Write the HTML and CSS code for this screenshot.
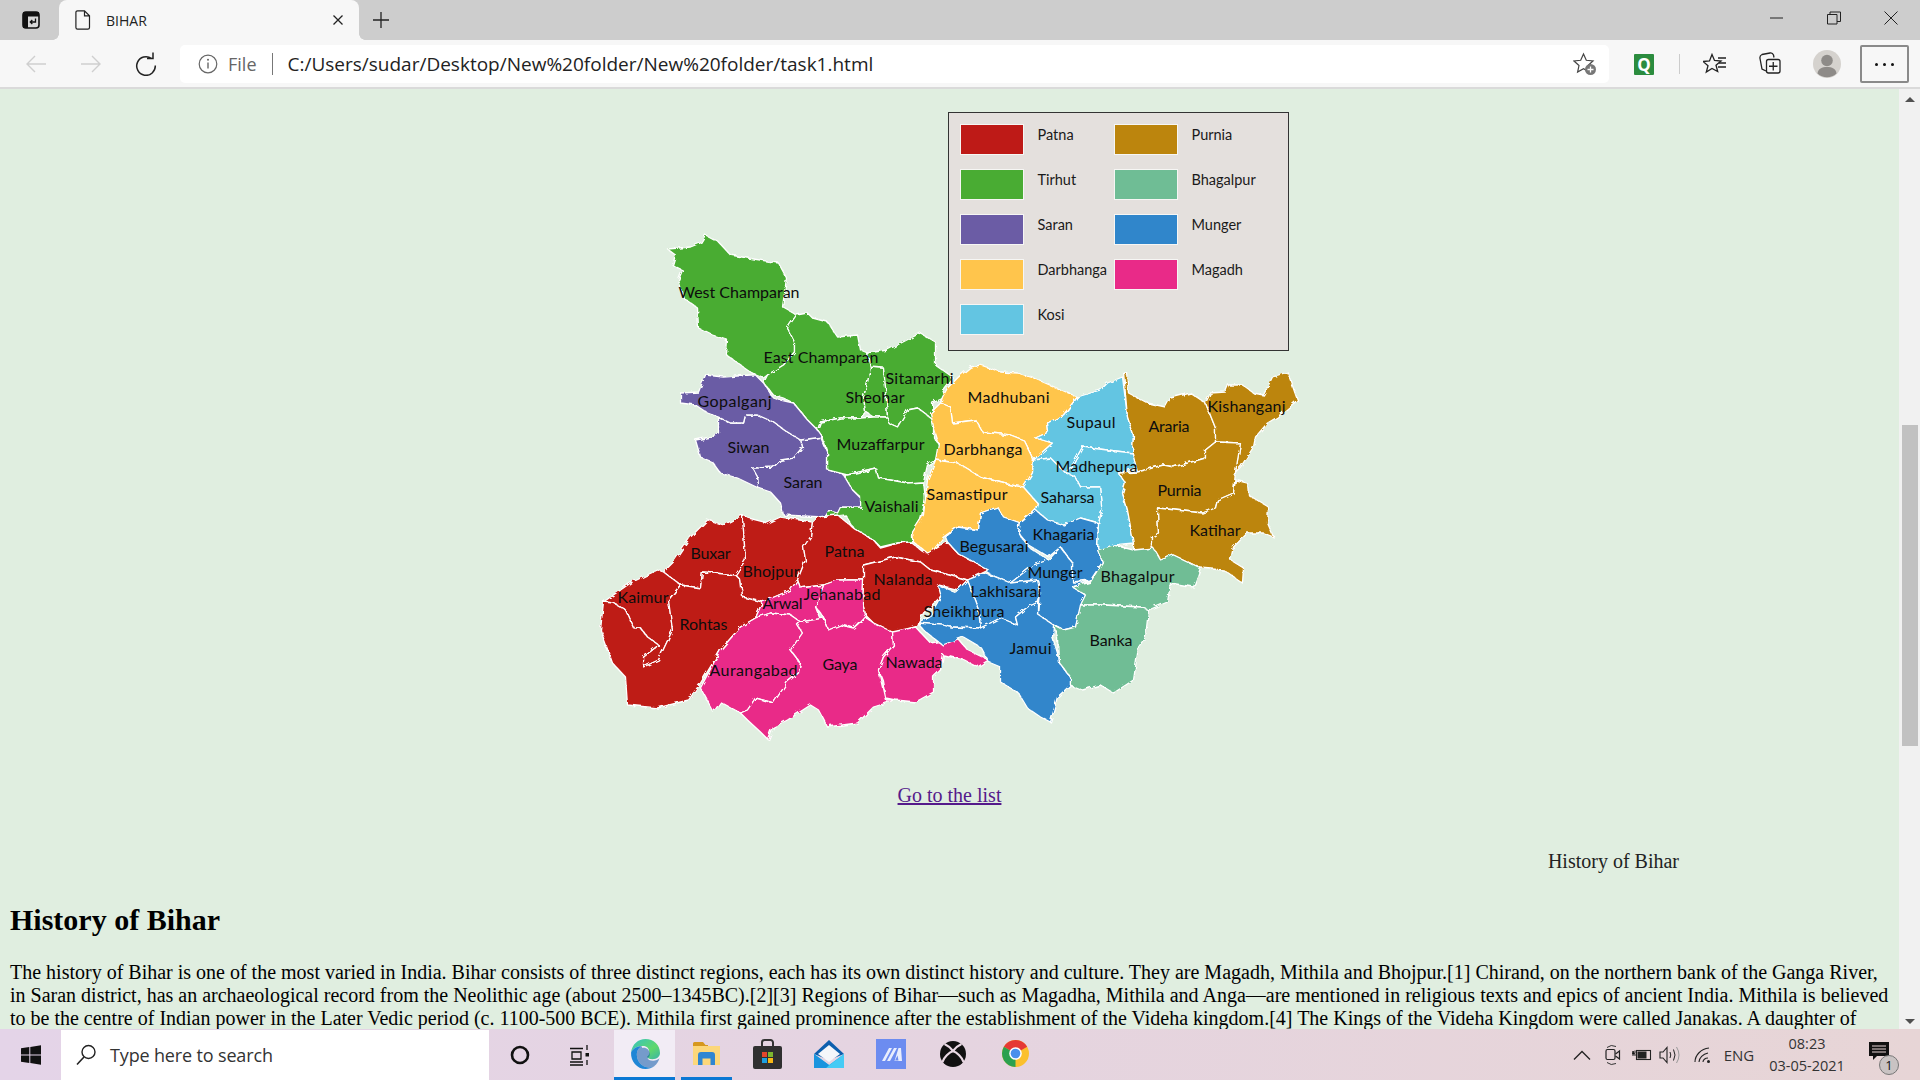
FILE: index.html
```html
<!DOCTYPE html>
<html lang="en">
<head>
<meta charset="utf-8">
<title>BIHAR</title>
<link rel="stylesheet" href="styles.css">
</head>
<body>
<div class="window">
  <header class="tabbar">
    <div class="tab-actions">
      <svg width="18" height="18" viewBox="0 0 18 18"><rect x="1" y="1" width="16" height="16" rx="3" fill="#d8d8d8" stroke="#111" stroke-width="1.600"/><path d="M1 1h16v4.500H6V17H1z" fill="#111"/><path d="M13.500 7.500V11H8.500M10.300 9 8.300 11l2 2" fill="none" stroke="#111" stroke-width="1.300"/></svg>
    </div>
    <div class="tab">
      <svg class="tab-file" width="16" height="20" viewBox="0 0 16 20"><path d="M2.500 .8h7l5 5v11.700a1.600 1.600 0 0 1-1.600 1.600H2.500a1.600 1.600 0 0 1-1.600-1.600V2.400A1.600 1.600 0 0 1 2.500 .8zM9.500 .8v5h5" fill="none" stroke="#222" stroke-width="1.200"/></svg>
      <span class="tab-title">BIHAR</span>
      <svg class="tab-close" width="10" height="10" viewBox="0 0 10 10"><path d="M.5 .5l9 9M9.500 .5l-9 9" stroke="#222" stroke-width="1.300"/></svg>
    </div>
    <div class="new-tab">
      <svg width="18" height="18" viewBox="0 0 18 18"><path d="M9 1v16M1 9h16" stroke="#222" stroke-width="1.300"/></svg>
    </div>
    <div class="win-controls">
      <div class="win-btn"><svg width="14" height="14" viewBox="0 0 14 14"><path d="M0 7h13" stroke="#222" stroke-width="1"/></svg></div>
      <div class="win-btn"><svg width="14" height="14" viewBox="0 0 14 14"><path d="M.5 3.500h9.500v9.500H.5zM3 3.500V1h10.500v9.500H10" fill="none" stroke="#222" stroke-width="1"/></svg></div>
      <div class="win-btn"><svg width="14" height="14" viewBox="0 0 14 14"><path d="M.5 .5l13 13M13.500 .5l-13 13" stroke="#222" stroke-width="1"/></svg></div>
    </div>
  </header>

  <nav class="toolbar">
    <div class="nav-btn"><svg width="22" height="20" viewBox="0 0 22 20"><path d="M21 10H2M10 2l-8 8 8 8" fill="none" stroke="#cfcfcf" stroke-width="1.400"/></svg></div>
    <div class="nav-btn"><svg width="22" height="20" viewBox="0 0 22 20"><path d="M1 10h19M12 2l8 8-8 8" fill="none" stroke="#cfcfcf" stroke-width="1.400"/></svg></div>
    <div class="nav-btn"><svg width="22" height="24" viewBox="0 0 22 24"><path d="M16.500 6.500A9.300 9.300 0 1 0 20.300 13.500" fill="none" stroke="#222" stroke-width="1.500"/><path d="M12 6.500h6V.5" fill="none" stroke="#222" stroke-width="1.500"/></svg></div>
    <div class="address">
      <svg width="20" height="20" viewBox="0 0 20 20"><circle cx="10" cy="10" r="8.800" fill="none" stroke="#666" stroke-width="1.200"/><path d="M10 8.500v6" stroke="#666" stroke-width="1.400"/><circle cx="10" cy="5.800" r="1" fill="#666"/></svg>
      <span class="addr-file">File</span>
      <span class="addr-sep"></span>
      <span class="addr-url">C:/Users/sudar/Desktop/New%20folder/New%20folder/task1.html</span>
      <svg class="addr-star" width="24" height="24" viewBox="0 0 24 24"><path d="M10.500 2l2.800 6.300 6.700.7-5 4.500 1.400 6.600-5.900-3.400-5.900 3.400 1.400-6.600-5-4.500 6.700-.7z" fill="none" stroke="#444" stroke-width="1.200"/><circle cx="17.500" cy="17.500" r="5.500" fill="#777"/><path d="M17.500 14.500v6M14.500 17.500h6" stroke="#fff" stroke-width="1.300"/></svg>
    </div>
    <div class="ext-cell"><span class="ext-q">Q</span></div>
    <span class="tool-sep"></span>
    <div class="tool"><svg width="24" height="22" viewBox="0 0 24 22"><path d="M9 1.500l2.500 6 6.500.5-5 4.200 1.700 6.300L9 15.500l-5.700 3.500 1.700-6.300L0 8.500l6.500-.5z" fill="none" stroke="#222" stroke-width="1.300"/><path d="M15 5h8M16 10h7M15 14h8" stroke="#222" stroke-width="1.300"/></svg></div>
    <div class="tool"><svg width="22" height="24" viewBox="0 0 22 24"><path d="M7 19 3 17 1 6.500Q.5 3.500 3 2.500L11 1q2.500-.5 3.500 2L15 5.500" fill="none" stroke="#222" stroke-width="1.300"/><rect x="7.500" y="7.500" width="13.500" height="13.500" rx="2" fill="none" stroke="#222" stroke-width="1.300"/><path d="M14.250 10v8.500M10 14.250h8.500" stroke="#222" stroke-width="1.300"/></svg></div>
    <div class="tool tool-wide"><svg width="28" height="28" viewBox="0 0 28 28"><circle cx="14" cy="14" r="14" fill="#d5d2ce"/><circle cx="14" cy="10.500" r="5.800" fill="#8e8b88"/><path d="M4.500 23.500C5 18.500 9 17 14 17s9 1.500 9.500 6.500a14 14 0 0 1-19 0z" fill="#8e8b88"/></svg></div>
    <div class="menu-btn"><span class="dot"></span><span class="dot"></span><span class="dot"></span></div>
  </nav>

  <div class="viewport">
    <main class="page">
      <figure class="map-figure">
        <svg class="map" viewBox="589.500 100 720 650" role="img" aria-label="Map of Bihar divisions">
          <defs>
            <filter id="rough" x="-5%" y="-5%" width="110%" height="110%">
              <feTurbulence type="fractalNoise" baseFrequency="0.14" numOctaves="3" seed="4"/>
              <feDisplacementMap in="SourceGraphic" scale="5"/>
            </filter>
          </defs>
          <g class="districts" filter="url(#rough)">
            <g class="d-green">
              <polygon points="667,249 690,247 700,243 705,235 718,242 730,255 753,259 778,263 786,278 782,307 796,315 787,328 794,342 794,352 783,365 767,375 763,378 753,374 740,365 726,355 727,340 712,335 698,328 697,308 683,298 678,280 682,270 672,265 675,255"/>
              <polygon points="796,315 807,313 812,318 827,322 837,337 857,335 860,350 867,353 870,367 867,383 863,397 865,412 860,418 840,418 820,422 817,430 807,420 793,403 783,398 773,395 763,383 767,375 783,365 794,352 794,342 787,328"/>
              <polygon points="870,367 883,368 885,387 886,400 887,417 873,417 865,412 863,397 867,383"/>
              <polygon points="867,353 887,350 920,333 935,342 935,365 952,377 942,390 945,397 932,403 933,420 917,408 907,410 897,427 888,423 887,417 886,400 885,387 883,368 870,367"/>
              <polygon points="817,430 820,422 840,418 860,418 873,417 887,417 888,423 897,427 907,410 917,408 933,420 933,437 940,447 935,460 927,465 923,482 907,483 878,478 875,468 847,475 827,470 827,453 822,437"/>
              <polygon points="847,475 875,468 878,478 907,483 923,482 925,500 920,520 912,533 912,542 897,543 880,547 873,540 853,528 845,515 828,517 823,513 836,508 840,507 860,507 860,497 852,490 843,475"/>
            </g>
            <g class="d-purple">
              <polygon points="800,440 820,437 827,453 827,470 843,475 852,490 860,498 860,507 840,507 837,513 827,510 823,517 783,515 780,503 770,492 758,488 757,477 752,468 773,467 780,460 793,458 802,447"/>
              <polygon points="718,417 730,423 743,423 745,415 757,415 773,422 787,432 800,440 802,447 793,458 780,460 773,467 752,468 757,477 758,488 737,478 720,473 712,462 700,457 695,440 710,437 718,433"/>
              <polygon points="705,375 723,377 750,375 755,375 763,383 772,397 780,400 793,403 807,420 817,430 822,437 800,440 787,432 773,422 757,415 745,415 743,423 730,423 718,417 707,413 695,405 680,403 680,393 698,392"/>
            </g>
            <g class="d-red">
              <polygon points="707,520 723,525 742,515 745,560 735,575 702,572 700,588 680,585 663,572 673,562 690,537"/>
              <polygon points="742,515 748,518 767,523 780,517 812,522 810,537 803,547 805,560 797,580 790,590 762,602 750,600 742,597 740,580 735,575 745,560"/>
              <polygon points="812,522 817,517 837,515 853,528 873,540 880,548 898,543 910,542 923,552 947,542 957,553 988,570 967,580 930,570 920,562 895,557 863,565 863,580 837,580 823,585 800,588 797,580 805,560 803,547 810,537"/>
              <polygon points="863,565 895,557 920,562 930,570 967,580 958,590 938,585 940,597 923,613 915,627 893,633 873,623 865,615 862,603 863,580"/>
              <polygon points="603,602 610,597 630,583 657,570 663,572 680,585 668,600 672,630 658,660 643,667 643,657 658,645 647,637 640,628 633,628 625,610 613,603"/>
              <polygon points="603,602 613,603 625,610 633,628 640,628 647,637 658,645 643,657 643,667 658,660 672,630 668,600 680,585 700,588 702,572 735,575 740,580 742,597 762,602 755,618 740,627 720,650 700,683 688,700 657,708 627,705 625,677 612,663 600,630"/>
            </g>
            <g class="d-pink">
              <polygon points="823,585 837,580 863,580 862,603 865,615 853,628 840,625 828,630 823,617 815,607"/>
              <polygon points="762,602 790,590 797,580 800,588 823,585 815,607 820,620 800,622 790,615 770,613 755,618"/>
              <polygon points="755,618 770,613 790,615 800,622 797,625 802,633 790,650 800,663 798,673 787,682 773,703 755,698 747,710 740,713 720,702 713,712 700,688 720,650 740,627"/>
              <polygon points="800,622 823,618 828,630 840,625 853,628 865,617 873,623 892,632 893,645 883,657 878,670 885,700 895,700 873,707 857,723 827,727 818,710 810,705 787,720 773,727 768,740 760,732 747,720 740,713 747,710 755,698 773,703 787,682 798,673 800,663 790,650 802,633 797,625"/>
              <polygon points="892,632 915,627 930,643 957,638 967,650 988,660 977,667 963,660 943,655 940,670 933,677 933,692 915,702 895,700 885,698 882,680 878,670 883,657 893,645"/>
            </g>
            <g class="d-yellow">
              <polygon points="947,388 958,377 970,367 980,365 1000,372 1017,373 1033,378 1077,397 1063,415 1047,423 1048,432 1035,438 1052,443 1033,460 1023,440 1010,435 982,432 975,420 952,423 950,407 940,403 942,397"/>
              <polygon points="940,403 950,407 952,423 975,420 982,432 1010,435 1023,440 1033,460 1032,473 1023,487 1010,485 980,477 957,463 935,460 938,443 933,427 930,413"/>
              <polygon points="935,460 957,463 980,477 1010,485 1023,487 1037,503 1035,508 1020,523 1003,517 997,507 980,513 978,530 957,527 943,537 933,550 927,553 913,542 912,532 923,515 927,480"/>
            </g>
            <g class="d-cyan">
              <polygon points="1077,397 1100,390 1107,383 1122,377 1127,417 1133,435 1132,453 1107,450 1082,447 1072,465 1065,473 1050,458 1033,460 1052,443 1035,438 1048,432 1047,423 1063,415"/>
              <polygon points="1082,447 1107,450 1132,453 1137,467 1118,473 1125,483 1122,493 1127,510 1133,543 1113,545 1097,550 1098,523 1102,507 1100,487 1080,487 1075,477 1065,473 1072,465"/>
              <polygon points="1033,460 1050,458 1065,473 1075,477 1080,487 1100,487 1102,507 1098,523 1080,518 1063,525 1047,520 1035,510 1037,503 1023,487 1032,473"/>
            </g>
            <g class="d-gold">
              <polygon points="1123,372 1126,372 1128,393 1147,403 1165,407 1170,398 1190,393 1205,403 1215,428 1215,442 1205,450 1205,458 1173,467 1163,465 1137,472 1132,453 1133,435 1127,417"/>
              <polygon points="1205,403 1210,393 1225,392 1228,385 1242,385 1253,393 1263,395 1272,377 1287,372 1297,400 1277,417 1267,423 1255,437 1253,447 1240,467 1235,472 1240,443 1215,442 1215,428"/>
              <polygon points="1137,472 1163,465 1173,467 1205,458 1205,450 1215,442 1240,443 1235,472 1233,493 1217,500 1215,508 1202,513 1157,508 1158,533 1152,537 1152,550 1133,550 1133,543 1127,510 1122,493 1125,483 1118,473"/>
              <polygon points="1157,508 1202,513 1215,508 1217,500 1233,493 1235,480 1247,483 1248,495 1268,507 1267,523 1273,537 1263,533 1247,533 1233,547 1230,560 1243,568 1242,583 1223,570 1200,568 1173,555 1160,560 1152,550 1152,537 1158,533"/>
            </g>
            <g class="d-blue">
              <polygon points="945,537 957,527 978,530 980,513 997,507 1003,517 1020,523 1018,533 1028,547 1048,560 1033,565 1010,583 987,573 988,570 957,553 947,542"/>
              <polygon points="1020,523 1035,510 1047,520 1063,525 1080,518 1098,523 1097,547 1102,562 1090,580 1072,582 1072,563 1060,547 1048,557 1028,545 1018,533"/>
              <polygon points="1060,547 1072,563 1072,582 1090,582 1072,587 1085,595 1075,627 1063,630 1053,625 1038,615 1040,593 1037,580 1010,583 1033,565 1048,560"/>
              <polygon points="967,580 985,573 1010,583 1037,580 1040,593 1038,602 1027,607 1015,617 1017,625 1000,618 980,628 978,610"/>
              <polygon points="937,585 955,592 967,580 978,610 980,628 950,627 917,623 930,615 940,597"/>
              <polygon points="917,623 943,625 950,627 980,628 1000,618 1017,625 1015,617 1027,607 1038,602 1038,615 1053,625 1052,637 1057,653 1058,662 1070,677 1070,685 1057,697 1050,722 1040,717 1027,708 1018,693 1000,682 1000,667 988,662 980,647 963,637 942,645 923,630"/>
            </g>
            <g class="d-teal">
              <polygon points="1097,550 1113,545 1133,550 1153,548 1160,560 1173,555 1200,568 1193,587 1170,583 1167,602 1148,610 1140,607 1103,605 1080,605 1085,595 1072,587 1090,582 1102,562"/>
              <polygon points="1080,605 1103,605 1140,607 1148,610 1145,637 1138,647 1133,680 1113,693 1100,685 1082,690 1070,685 1070,677 1058,662 1057,637 1053,625 1063,630 1075,627"/>
            </g>
          </g>
          <g class="labels">
            <text x="678" y="298" textLength="121">West Champaran</text>
            <text x="763" y="363" textLength="115">East Champaran</text>
            <text x="885" y="384" textLength="68">Sitamarhi</text>
            <text x="845" y="403" textLength="59">Sheohar</text>
            <text x="697" y="407" textLength="74">Gopalganj</text>
            <text x="836" y="450" textLength="88">Muzaffarpur</text>
            <text x="727" y="453" textLength="42">Siwan</text>
            <text x="783" y="488" textLength="39">Saran</text>
            <text x="864" y="512" textLength="54">Vaishali</text>
            <text x="690" y="559" textLength="40">Buxar</text>
            <text x="742" y="577" textLength="57">Bhojpur</text>
            <text x="824" y="557" textLength="40">Patna</text>
            <text x="873" y="585" textLength="59">Nalanda</text>
            <text x="803" y="600" textLength="77">Jehanabad</text>
            <text x="617" y="603" textLength="51">Kaimur</text>
            <text x="762" y="609" textLength="40">Arwal</text>
            <text x="679" y="630" textLength="48">Rohtas</text>
            <text x="709" y="676" textLength="88">Aurangabad</text>
            <text x="822" y="670" textLength="35">Gaya</text>
            <text x="885" y="668" textLength="57">Nawada</text>
            <text x="967" y="403" textLength="82">Madhubani</text>
            <text x="1066" y="428" textLength="49">Supaul</text>
            <text x="1148" y="432" textLength="41">Araria</text>
            <text x="1207" y="412" textLength="78">Kishanganj</text>
            <text x="943" y="455" textLength="79">Darbhanga</text>
            <text x="1055" y="472" textLength="82">Madhepura</text>
            <text x="1157" y="496" textLength="44">Purnia</text>
            <text x="926" y="500" textLength="81">Samastipur</text>
            <text x="1040" y="503" textLength="54">Saharsa</text>
            <text x="1189" y="536" textLength="51">Katihar</text>
            <text x="1032" y="540" textLength="62">Khagaria</text>
            <text x="959" y="552" textLength="69">Begusarai</text>
            <text x="1100" y="582" textLength="74">Bhagalpur</text>
            <text x="1027" y="578" textLength="55">Munger</text>
            <text x="970" y="597" textLength="71">Lakhisarai</text>
            <text x="923" y="617" textLength="81">Sheikhpura</text>
            <text x="1089" y="646" textLength="43">Banka</text>
            <text x="1009" y="654" textLength="42">Jamui</text>
          </g>
        </svg>
        <ul class="legend">
          <li class="legend-item"><span class="swatch s-red"></span>Patna</li>
          <li class="legend-item"><span class="swatch s-green"></span>Tirhut</li>
          <li class="legend-item"><span class="swatch s-purple"></span>Saran</li>
          <li class="legend-item"><span class="swatch s-yellow"></span>Darbhanga</li>
          <li class="legend-item"><span class="swatch s-cyan"></span>Kosi</li>
          <li class="legend-item"><span class="swatch s-gold"></span>Purnia</li>
          <li class="legend-item"><span class="swatch s-teal"></span>Bhagalpur</li>
          <li class="legend-item"><span class="swatch s-blue"></span>Munger</li>
          <li class="legend-item"><span class="swatch s-pink"></span>Magadh</li>
        </ul>
      </figure>
      <p class="list-link"><a href="#list">Go to the list</a></p>
      <p class="caption">History of Bihar</p>
      <h2 class="title">History of Bihar</h2>
      <p class="body-text">The history of Bihar is one of the most varied in India. Bihar consists of three distinct regions, each has its own distinct history and culture. They are Magadh, Mithila and Bhojpur.[1] Chirand, on the northern bank of the Ganga River, in Saran district, has an archaeological record from the Neolithic age (about 2500–1345BC).[2][3] Regions of Bihar—such as Magadha, Mithila and Anga—are mentioned in religious texts and epics of ancient India. Mithila is believed to be the centre of Indian power in the Later Vedic period (c. 1100-500 BCE). Mithila first gained prominence after the establishment of the Videha kingdom.[4] The Kings of the Videha Kingdom were called Janakas. A daughter of</p>
    </main>
    <aside class="scrollbar">
      <span class="arrow-up"></span>
      <div class="track"><span class="thumb"></span></div>
      <span class="arrow-down"></span>
    </aside>
  </div>

  <footer class="taskbar">
    <div class="start"><svg width="20" height="20" viewBox="0 0 20 20"><path d="M0 3.200 8.300 2v7.500H0zM9.300 1.900 20 .3v9.200H9.300zM0 10.500h8.300V18L0 16.800zM9.300 10.500H20v9.200L9.300 18.100z" fill="#111"/></svg></div>
    <div class="search">
      <svg width="22" height="22" viewBox="0 0 22 22"><circle cx="13.500" cy="8" r="6.500" fill="none" stroke="#222" stroke-width="1.400"/><path d="M9 13 2 20.500" stroke="#222" stroke-width="1.600"/></svg>
      <span>Type here to search</span>
    </div>
    <div class="task-cell"><svg width="20" height="20" viewBox="0 0 20 20"><circle cx="10" cy="10" r="8" fill="none" stroke="#111" stroke-width="2.600"/></svg></div>
    <div class="task-cell"><svg width="22" height="22" viewBox="0 0 22 22"><path d="M1 4.500h13M1 21h13M3 8h9v7H3zM1 18h13M18 1v5M18 16v5" fill="none" stroke="#111" stroke-width="1.300"/><rect x="16.500" y="9" width="3.500" height="3.500" fill="#111"/></svg></div>
    <div class="app app-active">
      <svg width="30" height="30" viewBox="0 0 28 28"><defs><linearGradient id="edgeA" x1="0" y1="0" x2="1" y2="1"><stop offset="0" stop-color="#36c2c4"/><stop offset=".6" stop-color="#5fd86a"/><stop offset="1" stop-color="#39b4a8"/></linearGradient></defs><path d="M1 12.500C2 5 7.500 0 14.500 0 22 0 28 5.500 28 13c0 3.500-3 5.800-7 5.800-3 0-5-1.300-5-2.300 0-.8 2-1 2-4C18 9 16 6.500 12 6.500 6.500 6.500 2.500 9 1 12.500z" fill="url(#edgeA)"/><path d="M1 12.500C2.500 9 6.500 6.500 11 6.800 7.500 8.500 6 12 6.500 16c.5 5 4.500 10 10.500 10.500 3 .3 5-.5 6-1.500C20.500 27.200 17.500 28 14.500 28 6.500 28 .5 20.500 1 12.500z" fill="#1f86d6"/><path d="M11 6.800c-3.500 1.700-5 5.200-4.500 9.200.5 5 4.500 10 10.500 10.500 3 .3 5-.5 6-1.500 1.800-1.500 3.500-3.800 4.500-7-1.500 1.500-3.500 2.300-6 2.300-3 0-5-1.300-5-2.300 0-.8 2-1 2-4 0-3.700-3-6.200-7-5.700 0 0-.5-.5-.5-1.500z" fill="#0f5aa8" opacity=".55"/></svg>
    </div>
    <div class="app app-open">
      <svg width="27" height="23" viewBox="0 0 27 23"><path d="M0 1.500A1.500 1.500 0 0 1 1.500 0H10l2.500 3H15v1H0z" fill="#d6981e"/><path d="M0 4h27v19H0z" fill="#fcd77a"/><path d="M5 23V13a3 3 0 0 1 3-3h11a3 3 0 0 1 3 3v10h-4.500v-6.500h-8V23z" fill="#2f86d2"/></svg>
    </div>
    <div class="app">
      <svg width="29" height="30" viewBox="0 0 29 30"><path d="M9 9V3.500A2.500 2.500 0 0 1 11.500 1h6A2.500 2.500 0 0 1 20 3.500V9" fill="none" stroke="#333" stroke-width="2"/><rect y="7" width="29" height="23" rx="2" fill="#303030"/><rect x="9" y="13" width="5" height="5" fill="#e2452c"/><rect x="15" y="13" width="5" height="5" fill="#7db72f"/><rect x="9" y="19" width="5" height="5" fill="#1c9fe0"/><rect x="15" y="19" width="5" height="5" fill="#f7b815"/></svg>
    </div>
    <div class="app">
      <svg width="30" height="28" viewBox="0 0 30 28"><path d="M15 0 30 14 15 20 0 14z" fill="#0c5fae"/><path d="M4 14 15 5l11 9-11 8z" fill="#f4f7fa"/><path d="M0 14 15 25 30 14v14H0z" fill="#25b3ee"/><path d="M30 14v14H12z" fill="#45cbf5"/><path d="M0 14 15 25 12 28H0z" fill="#1a94de"/></svg>
    </div>
    <div class="app">
      <svg width="30" height="30" viewBox="0 0 30 30"><rect width="30" height="30" fill="#6c8cf0"/><path d="M6 22 13 9h3L9 22zM11 22 18 9h3l-7 13zM22.500 9h2.500l1 13h-7.500z" fill="#e8edfd"/><path d="M21.500 16.500l-2.500 5h3.500z" fill="#6c8cf0"/></svg>
    </div>
    <div class="app">
      <svg width="26" height="26" viewBox="0 0 26 26"><circle cx="13" cy="13" r="13" fill="#111"/><path d="M4.500 3C8 4.500 11 7.500 13 10 15 7.500 18 4.500 21.500 3M2.500 21C4 16 9 11.500 13 10c4 1.500 9 6 10.500 11" fill="none" stroke="#ead9e4" stroke-width="2.200"/></svg>
    </div>
    <div class="app">
      <svg width="27" height="27" viewBox="-14 -14 28 28"><circle r="14" fill="#fbc02d"/><path d="M0 0-12.100-7A14 14 0 0 1 12.100-7z" fill="#e53935"/><path d="M0 0-12.100-7A14 14 0 0 0 0 14z" fill="#2ba14f"/><circle r="6.500" fill="#fff"/><circle r="5" fill="#4a8fec"/></svg>
    </div>
    <div class="tray">
      <div class="tray-cell tc-chev"><svg width="18" height="10" viewBox="0 0 18 10"><path d="M1 9.500 9 1.500l8 8" fill="none" stroke="#222" stroke-width="1.300"/></svg></div>
      <div class="tray-cell tc-cam"><svg width="16" height="22" viewBox="0 0 16 22"><path d="M2 3.500Q6 0 11 2.500M2 18.500q4 3.500 9 1" fill="none" stroke="#333"/><rect x="1" y="5.500" width="9" height="10" rx="1.500" fill="none" stroke="#222" stroke-width="1.200"/><path d="M10.500 10l4-3v8l-4-3" fill="none" stroke="#222" stroke-width="1.200"/></svg></div>
      <div class="tray-cell tc-bat"><svg width="20" height="14" viewBox="0 0 20 14"><rect x="4.500" y="2.500" width="14" height="9" fill="none" stroke="#222" stroke-width="1.100"/><rect x="5.500" y="3.500" width="9" height="7" fill="#222"/><path d="M0 7h5M1 3l1.500 3h-2zM3 2.500v3" stroke="#222"/></svg></div>
      <div class="tray-cell tc-vol"><svg width="22" height="18" viewBox="0 0 22 18"><path d="M1 6h3l4-4.500v15L4 12H1z" fill="none" stroke="#222" stroke-width="1.100"/><path d="M11 6q1.500 3 0 6M14.500 3.500q3 5.500 0 11" fill="none" stroke="#222"/><path d="M17.500 1q5 8 0 16" fill="none" stroke="#999"/></svg></div>
      <div class="tray-cell tc-wifi"><svg width="18" height="16" viewBox="0 0 18 16"><path d="M1 15C1 8 7 2 15 1M5 15c0-4 4-8 9-9M9 15c0-2 2-4 5-4" fill="none" stroke="#222" stroke-width="1.100"/><circle cx="14.500" cy="14.500" r="1.500" fill="#222"/></svg></div>
      <div class="tray-cell tc-lang">ENG</div>
      <div class="clock"><span>08:23</span><span>03-05-2021</span></div>
      <div class="notify">
        <svg width="20" height="18" viewBox="0 0 20 18"><path d="M0 0h20v14H8L4 18v-4H0z" fill="#111"/><path d="M3 4h14M3 7h14M3 10h14" stroke="#e8d5d5"/></svg>
        <span class="notify-badge">1</span>
      </div>
    </div>
  </footer>
</div>
</body>
</html>
```

FILE: styles.css
```css
* { box-sizing: border-box; }
html, body { margin: 0; height: 100%; overflow: hidden; }
body { font-family: "Liberation Serif", serif; }

.window { display: flex; flex-direction: column; width: 1920px; height: 1080px; }

/* Tab strip */
.tabbar { display: flex; align-items: stretch; height: 40px; flex: none; background: #cdcdcd; font-family: "Open Sans", sans-serif; }
.tab-actions { width: 59px; display: flex; align-items: center; justify-content: center; padding-left: 2px; }
.tab { position: relative; width: 300px; display: flex; align-items: center; padding: 0 16px 0 16px; background: #f7f7f7; border-radius: 8px 8px 0 0; }
.tab::before, .tab::after { content: ""; position: absolute; bottom: 0; width: 6px; height: 6px; }
.tab::before { left: -6px; background: radial-gradient(circle at 0 0, transparent 5.500px, #f7f7f7 6px); }
.tab::after { right: -6px; background: radial-gradient(circle at 100% 0, transparent 5.500px, #f7f7f7 6px); }
.tab-title { margin-left: 15px; font-size: 14px; color: #222; flex: 1; }
.new-tab { width: 44px; display: flex; align-items: center; justify-content: center; }
.win-controls { margin-left: auto; display: flex; padding-right: 1px; }
.win-btn { width: 57px; display: flex; align-items: center; justify-content: center; padding-bottom: 4px; }

/* Toolbar */
.toolbar { display: flex; align-items: center; height: 49px; flex: none; padding: 1px 11px 0 8px; background: #f7f7f7; border-bottom: 2px solid #dadada; font-family: "Open Sans", sans-serif; }
.nav-btn { width: 55px; display: flex; align-items: center; justify-content: center; }
.address { margin-left: 7px; width: 1429px; height: 38px; display: flex; align-items: center; padding: 0 12px 0 18px; background: #fff; border-radius: 5px; }
.addr-file { margin-left: 10px; font-size: 18px; color: #666; }
.addr-sep { width: 1px; height: 22px; margin: 0 15px 0 15px; background: #777; }
.addr-url { font-size: 19px; color: #222; white-space: nowrap; flex: 1; }
.addr-star { flex: none; }
.ext-cell { width: 70px; display: flex; align-items: center; justify-content: center; }
.ext-q { width: 20px; height: 21px; display: flex; align-items: center; justify-content: center; background: #2b8c3e; color: #fff; font: bold 17px "Open Sans", sans-serif; border-radius: 1px; }
.tool-sep { width: 1px; height: 20px; margin-right: 7px; background: #ccc; }
.tool { width: 55px; display: flex; align-items: center; justify-content: center; }
.tool-wide { width: 60px; }
.menu-btn { margin-left: 3px; width: 49px; height: 38px; display: flex; align-items: center; justify-content: center; gap: 5px; border: 2px solid #8a8a8a; border-radius: 2px; }
.dot { width: 3px; height: 3px; border-radius: 50%; background: #111; }

/* Page */
.viewport { display: flex; flex: 1; min-height: 0; }
.page { width: 1899px; flex: none; overflow: hidden; padding: 11px 0 0; background: #e0eee0; color: #000; font-size: 20px; line-height: 23px; }
.map-figure { position: relative; width: 720px; height: 650px; margin: 0 auto; }
.map { display: block; width: 720px; height: 650px; }
.districts polygon { stroke: #fff; stroke-width: 1.300; stroke-linejoin: round; }
.d-green polygon { fill: #49ac33; }
.d-purple polygon { fill: #6b5ca5; }
.d-red polygon { fill: #be1a17; }
.d-pink polygon { fill: #e92a88; }
.d-yellow polygon { fill: #ffc54c; }
.d-cyan polygon { fill: #63c5e2; }
.d-gold polygon { fill: #bc850d; }
.d-blue polygon { fill: #3086cb; }
.d-teal polygon { fill: #6fbd95; }
.labels text { font-family: "Lato", sans-serif; font-size: 16px; fill: #0d0d0d; }

.legend { position: absolute; left: 358px; top: 12px; width: 341px; height: 239px; margin: 0; padding: 11px 0 0 11px; list-style: none; display: grid; grid-template-rows: repeat(5, 45px); grid-template-columns: 154px 1fr; grid-auto-flow: column; align-content: start; background: #e4e0dd; border: 1.500px solid #333; font-family: "Lato", sans-serif; font-size: 14.500px; line-height: 22px; color: #1a1a1a; }
.legend-item { display: flex; align-items: flex-start; gap: 14px; }
.swatch { width: 64px; height: 31px; flex: none; border: 1px solid #f6f6f4; }
.s-red { background: #be1a17; }
.s-green { background: #49ac33; }
.s-purple { background: #6b5ca5; }
.s-yellow { background: #ffc54c; }
.s-cyan { background: #63c5e2; }
.s-gold { background: #bc850d; }
.s-teal { background: #6fbd95; }
.s-blue { background: #3086cb; }
.s-pink { background: #e92a88; }

.list-link { margin: 34px 0 0; text-align: center; }
.list-link a { color: #551a8b; }
.caption { margin: 43px 220px 0 0; text-align: right; color: #222; }
.title { margin: 30px 10px 24px; font-size: 30px; line-height: 34px; font-weight: bold; }
.body-text { margin: 0 10px; }

/* Scrollbar */
.scrollbar { width: 21px; flex: 1; display: flex; flex-direction: column; align-items: center; background: #f1f1f1; padding: 8px 0 5px; }
.arrow-up { width: 0; height: 0; border: 5px solid transparent; border-top: 0; border-bottom: 5px solid #505050; }
.arrow-down { width: 0; height: 0; border: 5px solid transparent; border-bottom: 0; border-top: 5px solid #505050; }
.track { flex: 1; width: 100%; padding: 323px 2px 0 3px; }
.thumb { display: block; height: 321px; background: #c1c1c1; }

/* Taskbar */
.taskbar { display: flex; align-items: stretch; height: 51px; flex: none; padding-top: 1px; background: linear-gradient(90deg, #e4d4e8 0%, #e5d4e0 50%, #e7d5d6 100%); font-family: "Open Sans", sans-serif; color: #222; }
.start { width: 61px; display: flex; align-items: center; justify-content: center; }
.search { width: 428px; display: flex; align-items: center; gap: 13px; padding-left: 14px; background: #fff; font-size: 18px; letter-spacing: -0.150px; color: #333; }
.task-cell { width: 60px; display: flex; align-items: center; justify-content: center; margin-left: 1px; }
.task-cell + .task-cell { margin-left: 0; }
.app { width: 62px; display: flex; align-items: center; justify-content: center; border-bottom: 3px solid transparent; }
.app-active { width: 61px; margin-left: 4px; background: #f2ecf5; border-bottom-color: #0a78d4; }
.app-open { width: 51px; margin: 0 4px 0 6px; border-bottom-color: #0a78d4; }
.tray { margin-left: auto; display: flex; align-items: center; padding-right: 19px; font-size: 15px; }
.tray-cell { display: flex; align-items: center; justify-content: center; }
.tc-chev { width: 30px; }
.tc-cam { width: 32px; }
.tc-bat { width: 26px; }
.tc-vol { width: 30px; }
.tc-wifi { width: 36px; }
.tc-lang { width: 36px; color: #333; }
.clock { display: flex; flex-direction: column; align-items: center; width: 100px; font-size: 14.500px; line-height: 22px; color: #333; }
.notify { position: relative; width: 44px; height: 100%; display: flex; align-items: center; justify-content: center; padding-bottom: 8px; }
.notify-badge { position: absolute; left: 22px; top: 25px; width: 20px; height: 20px; display: flex; align-items: center; justify-content: center; border-radius: 50%; background: #c9c3c3; border: 1px solid #777; font-size: 13px; line-height: 1; color: #111; }
```
